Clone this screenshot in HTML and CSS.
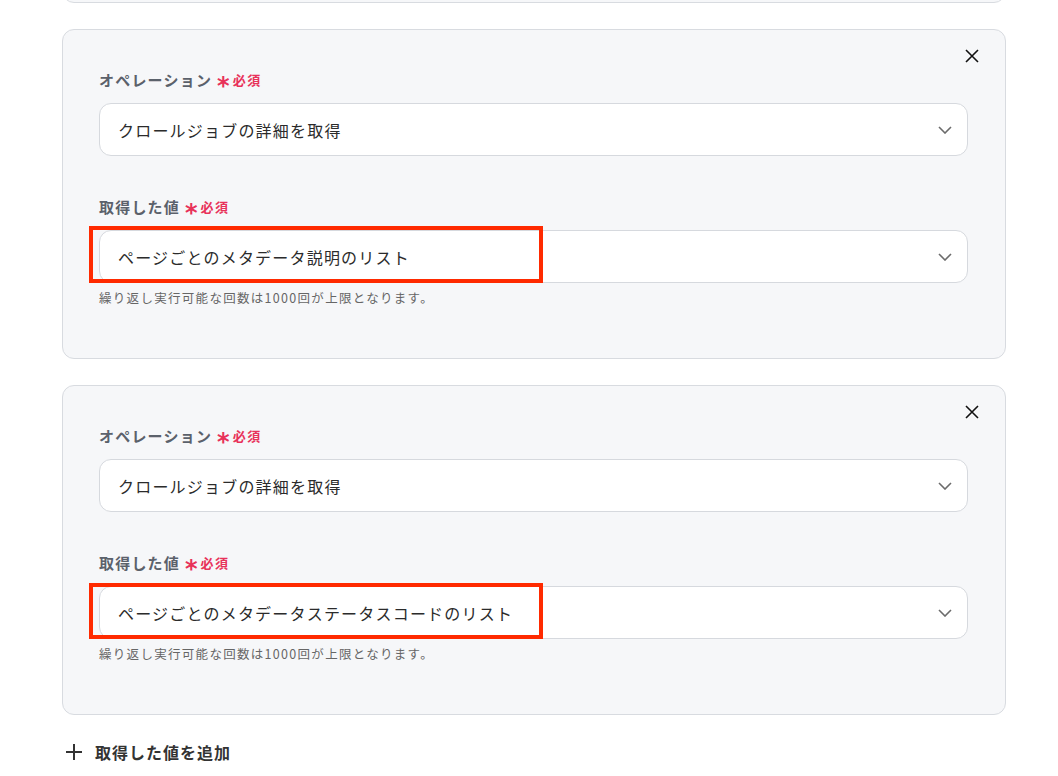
FILE: index.html
```html
<!DOCTYPE html>
<html lang="ja">
<head>
<meta charset="utf-8">
<link rel="stylesheet" href="styles.css">
</head>
<body>
<div class="page">
  <div class="card card-partial"></div>

  <div class="card">
    <div class="card-head">
      <button class="close" aria-label="閉じる">
        <svg width="14" height="14" viewBox="0 0 14 14"><path d="M1 1L13 13M13 1L1 13" stroke="#111" stroke-width="1.6" fill="none"/></svg>
      </button>
    </div>
    <div class="field">
      <div class="label">オペレーション<span class="ast">*</span><span class="req">必須</span></div>
      <div class="select">
        <span>クロールジョブの詳細を取得</span>
        <svg class="chev" width="14" height="8" viewBox="0 0 14 8"><path d="M1 1L7 7L13 1" stroke="#6b6b6b" stroke-width="1.6" fill="none"/></svg>
      </div>
    </div>
    <div class="field field-2">
      <div class="label">取得した値<span class="ast">*</span><span class="req">必須</span></div>
      <div class="select">
        <span>ページごとのメタデータ説明のリスト</span>
        <svg class="chev" width="14" height="8" viewBox="0 0 14 8"><path d="M1 1L7 7L13 1" stroke="#6b6b6b" stroke-width="1.6" fill="none"/></svg>
        <div class="mark mark-1"></div>
      </div>
      <div class="hint">繰り返し実行可能な回数は1000回が上限となります。</div>
    </div>
  </div>

  <div class="card">
    <div class="card-head">
      <button class="close" aria-label="閉じる">
        <svg width="14" height="14" viewBox="0 0 14 14"><path d="M1 1L13 13M13 1L1 13" stroke="#111" stroke-width="1.6" fill="none"/></svg>
      </button>
    </div>
    <div class="field">
      <div class="label">オペレーション<span class="ast">*</span><span class="req">必須</span></div>
      <div class="select">
        <span>クロールジョブの詳細を取得</span>
        <svg class="chev" width="14" height="8" viewBox="0 0 14 8"><path d="M1 1L7 7L13 1" stroke="#6b6b6b" stroke-width="1.6" fill="none"/></svg>
      </div>
    </div>
    <div class="field field-2">
      <div class="label">取得した値<span class="ast">*</span><span class="req">必須</span></div>
      <div class="select">
        <span>ページごとのメタデータステータスコードのリスト</span>
        <svg class="chev" width="14" height="8" viewBox="0 0 14 8"><path d="M1 1L7 7L13 1" stroke="#6b6b6b" stroke-width="1.6" fill="none"/></svg>
        <div class="mark mark-2"></div>
      </div>
      <div class="hint">繰り返し実行可能な回数は1000回が上限となります。</div>
    </div>
  </div>

  <div class="add">
    <svg width="16" height="16" viewBox="0 0 16 16"><path d="M8 0V16M0 8H16" stroke="#333" stroke-width="2" fill="none"/></svg>
    <span>取得した値を追加</span>
  </div>
</div>
</body>
</html>
```

FILE: styles.css
```css
html, body {
  margin: 0;
  padding: 0;
  background: #fff;
}
body {
  font-family: "Noto Sans CJK JP", "Noto Sans", sans-serif;
  color: #333;
  overflow: hidden;
  height: 776px;
}
.page {
  width: 944px;
  margin-left: 62px;
  display: flex;
  flex-direction: column;
  gap: 26px;
}
.card {
  box-sizing: border-box;
  background: #f6f7f9;
  border: 1px solid #d8dbe0;
  border-radius: 12px;
  padding: 16px 37px 51px 36px;
  display: flex;
  flex-direction: column;
}
.card-partial {
  height: 34px;
  margin-top: -31px;
  padding: 0;
}
.card-head {
  display: flex;
  justify-content: flex-end;
  height: 20px;
  margin-right: -14px;
}
.close {
  border: 0;
  background: none;
  padding: 0;
  width: 20px;
  height: 20px;
  display: flex;
  align-items: center;
  justify-content: center;
  cursor: pointer;
}
.field {
  display: flex;
  flex-direction: column;
  margin-top: 3px;
}
.field-2 {
  margin-top: 40px;
}
.label {
  font-size: 15px;
  line-height: 22px;
  font-weight: 700;
  letter-spacing: 1.2px;
  color: #5b616b;
  display: flex;
  align-items: center;
}
.ast {
  color: #e8325a;
  font-size: 24px;
  font-weight: 700;
  line-height: 22px;
  margin-left: 5px;
  letter-spacing: 0;
  position: relative;
  top: 6px;
  font-family: "DejaVu Sans", sans-serif;
}
.req {
  color: #e8325a;
  font-size: 13px;
  font-weight: 700;
  letter-spacing: 1.5px;
  margin-left: 3px;
}
.select {
  position: relative;
  box-sizing: border-box;
  height: 53px;
  margin-top: 12px;
  background: #fff;
  border: 1px solid #d6d9de;
  border-radius: 12px;
  padding: 0 15px 0 18px;
  display: flex;
  align-items: center;
  justify-content: space-between;
  font-size: 16px;
  letter-spacing: 1.2px;
  color: #2b2b2b;
}
.mark {
  position: absolute;
  box-sizing: border-box;
  border: 4px solid #ff2a00;
  left: -11px;
  width: 454px;
  pointer-events: none;
}
.mark-1 {
  top: -5px;
  height: 57px;
}
.mark-2 {
  top: -4px;
  height: 56px;
}
.hint {
  font-size: 12.5px;
  line-height: 18px;
  letter-spacing: 1.3px;
  color: #666;
  margin-top: 6px;
}
.add {
  display: flex;
  align-items: center;
  gap: 13px;
  margin-left: 4px;
  margin-top: -1px;
  font-size: 16px;
  letter-spacing: 1px;
  font-weight: 700;
  color: #333;
}
```
